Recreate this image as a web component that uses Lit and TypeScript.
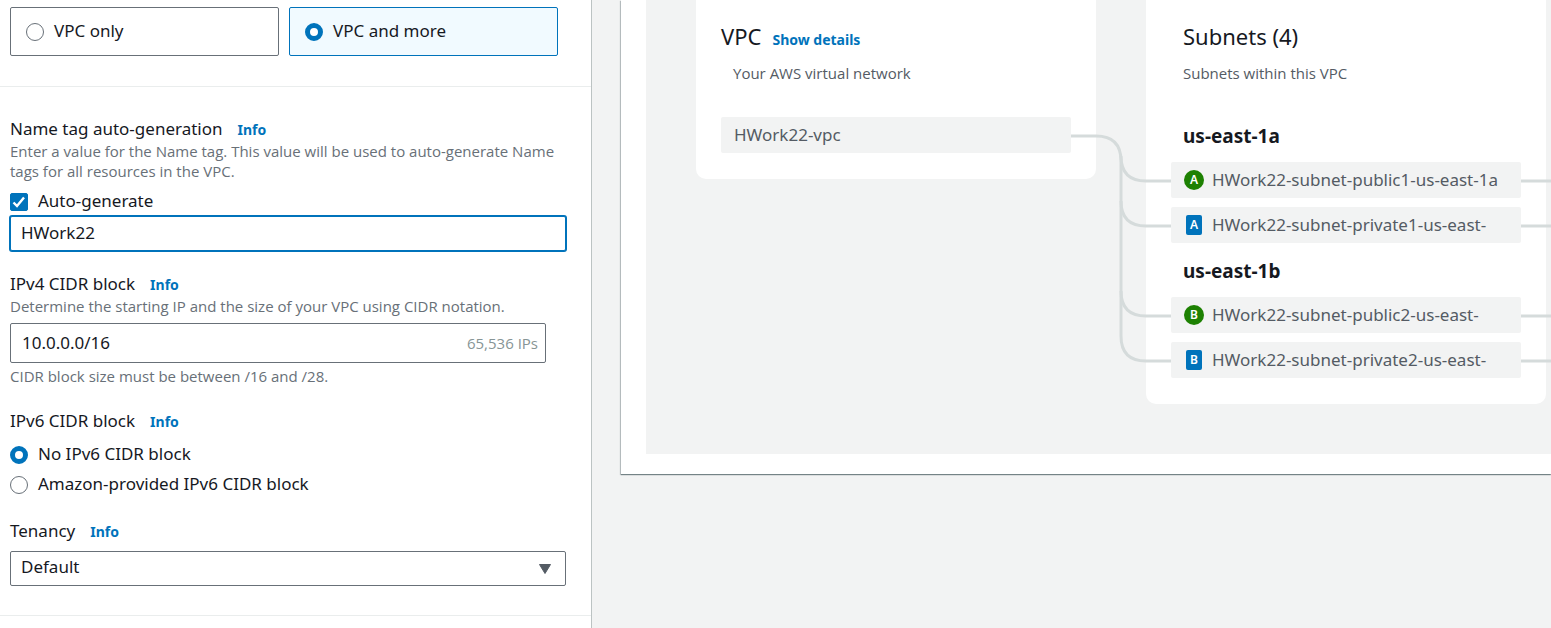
import { LitElement, html, svg, css } from "lit";
import { customElement, state } from "lit/decorators.js";

interface Subnet {
  zone: string;
  kind: "public" | "private";
  name: string;
}

interface Zone {
  name: string;
  subnets: Subnet[];
}

const ZONES: Zone[] = [
  {
    name: "us-east-1a",
    subnets: [
      { zone: "A", kind: "public", name: "HWork22-subnet-public1-us-east-1a" },
      { zone: "A", kind: "private", name: "HWork22-subnet-private1-us-east-" },
    ],
  },
  {
    name: "us-east-1b",
    subnets: [
      { zone: "B", kind: "public", name: "HWork22-subnet-public2-us-east-" },
      { zone: "B", kind: "private", name: "HWork22-subnet-private2-us-east-" },
    ],
  },
];

// Vertical centre of each subnet row on the canvas.
const ROWS = [181, 226, 316, 361];

const linkTo = (y: number) =>
  svg`<path d=${`M475 ${y - 25}Q475 ${y} 500 ${y}H525M875 ${y}H950`} />`;

@customElement("vpc-settings")
export class VpcSettings extends LitElement {
  @state() private resources = "more";

  static styles = css`
    :host {
      display: block;
      background: #fff;
      border-right: 1px solid #bcc3c3;
      color: #16191f;
    }
    * {
      box-sizing: border-box;
    }
    .section {
      padding: 31px 25px 29px 10px;
      border-bottom: 1px solid #eaeded;
    }
    .section.top {
      padding-top: 7px;
      padding-bottom: 30px;
    }
    .tiles {
      display: grid;
      grid-template-columns: 1fr 1fr;
      gap: 10px;
      margin-right: 8px;
    }
    .tile {
      display: flex;
      align-items: center;
      gap: 10px;
      height: 49px;
      padding: 0 15px;
      border: 1px solid #687078;
      border-radius: 2px;
    }
    .tile.selected {
      border-color: #0073bb;
      background: #f1faff;
    }
    .field {
      margin-bottom: 24px;
    }
    .field:first-child {
      margin-bottom: 22px;
    }
    .field:last-child {
      margin-bottom: 0;
    }
    .head {
      display: flex;
      align-items: baseline;
      gap: 15px;
      height: 22px;
    }
    .info {
      color: #0073bb;
      font-size: 14px;
      font-weight: 700;
      text-decoration: none;
    }
    .note {
      margin: 1px 0 7px;
      color: #687078;
      font-family: "Open Sans", "Noto Sans", sans-serif;
      font-size: 15px;
      line-height: 20px;
    }
    .note.after {
      margin: 3px 0 0;
    }
    .choice {
      display: flex;
      align-items: center;
      gap: 10px;
      height: 22px;
      margin-top: 8px;
    }
    .head + .choice {
      margin-top: 12px;
    }
    .choice.check {
      margin: 10px 0 3px;
    }
    .choice span,
    .tile span {
      padding-bottom: 2px;
    }
    input,
    select {
      font: inherit;
      color: inherit;
      margin: 0;
    }
    input[type="radio"],
    input[type="checkbox"] {
      appearance: none;
      flex: none;
      width: 18px;
      height: 18px;
      border: 1px solid #687078;
      border-radius: 50%;
      background: #fff;
    }
    input[type="radio"]:checked {
      border: 5px solid #0073bb;
    }
    input[type="checkbox"] {
      border-radius: 2px;
    }
    .choice .box {
      display: grid;
      flex: none;
      padding: 0;
    }
    .box > * {
      grid-area: 1 / 1;
    }
    .box input:checked {
      border-color: #0073bb;
      background: #0073bb;
    }
    .box svg {
      pointer-events: none;
    }
    .text {
      display: block;
      width: 100%;
      height: 35px;
      padding: 0 10px 2px;
      border: 1px solid #687078;
      border-radius: 2px;
      background: #fff;
      outline: none;
    }
    .text.active {
      border-color: #0073bb;
      box-shadow: 0 0 0 1px #0073bb;
    }
    .cidr {
      display: flex;
      align-items: center;
      height: 40px;
      margin-right: 20px;
      padding: 0 7px 0 11px;
      border: 1px solid #687078;
      border-radius: 2px;
    }
    .cidr input {
      flex: 1;
      min-width: 0;
      padding: 0;
      border: 0;
      outline: none;
      background: none;
    }
    .count {
      color: #879596;
      font-family: "Open Sans", "Noto Sans", sans-serif;
      font-size: 15px;
    }
    .select {
      display: grid;
      align-items: center;
      margin-top: 9px;
    }
    .select > * {
      grid-area: 1 / 1;
    }
    .select select {
      appearance: none;
      width: 100%;
      height: 35px;
      padding: 0 10px 3px;
      border: 1px solid #687078;
      border-radius: 2px;
      background: #fff;
    }
    .select svg {
      justify-self: end;
      margin-right: 14px;
      pointer-events: none;
    }
  `;

  private tile(value: string, label: string) {
    const on = this.resources === value;
    return html`<label class="tile ${on ? "selected" : ""}">
      <input
        type="radio"
        name="resources"
        .checked=${on}
        @change=${() => (this.resources = value)}
      />
      <span>${label}</span>
    </label>`;
  }

  render() {
    return html`
      <div class="section top">
        <div class="tiles">
          ${this.tile("only", "VPC only")} ${this.tile("more", "VPC and more")}
        </div>
      </div>
      <div class="section">
        <div class="field">
          <div class="head">
            <label for="name">Name tag auto-generation</label>
            <a class="info" href="#name">Info</a>
          </div>
          <p class="note">
            Enter a value for the Name tag. This value will be used to
            auto-generate Name tags for all resources in the VPC.
          </p>
          <label class="choice check">
            <span class="box">
              <input type="checkbox" checked />
              <svg width="18" height="18" viewBox="0 0 18 18" fill="none">
                <path d="M3.5 9.5 7 13 14 4.5" stroke="#fff" stroke-width="2.4" />
              </svg>
            </span>
            <span>Auto-generate</span>
          </label>
          <input id="name" class="text active" type="text" value="HWork22" />
        </div>
        <div class="field">
          <div class="head">
            <label for="ipv4">IPv4 CIDR block</label>
            <a class="info" href="#ipv4">Info</a>
          </div>
          <p class="note">
            Determine the starting IP and the size of your VPC using CIDR notation.
          </p>
          <div class="cidr">
            <input id="ipv4" type="text" value="10.0.0.0/16" />
            <span class="count">65,536 IPs</span>
          </div>
          <p class="note after">CIDR block size must be between /16 and /28.</p>
        </div>
        <div class="field" role="radiogroup" aria-labelledby="ipv6">
          <div class="head">
            <span id="ipv6">IPv6 CIDR block</span>
            <a class="info" href="#ipv6">Info</a>
          </div>
          <label class="choice">
            <input type="radio" name="ipv6" checked />
            <span>No IPv6 CIDR block</span>
          </label>
          <label class="choice">
            <input type="radio" name="ipv6" />
            <span>Amazon-provided IPv6 CIDR block</span>
          </label>
        </div>
        <div class="field">
          <div class="head">
            <label for="tenancy">Tenancy</label>
            <a class="info" href="#tenancy">Info</a>
          </div>
          <div class="select">
            <select id="tenancy">
              <option>Default</option>
            </select>
            <svg width="14" height="12" viewBox="0 0 14 12">
              <path
                d="M1.5 1.5h11L7 10.5z"
                fill="#545b64"
                stroke="#545b64"
                stroke-linejoin="round"
              />
            </svg>
          </div>
        </div>
      </div>
    `;
  }
}

@customElement("vpc-preview")
export class VpcPreview extends LitElement {
  static styles = css`
    :host {
      display: block;
      overflow: hidden;
      padding-left: 29px;
      background: #f2f3f3;
      color: #16191f;
    }
    * {
      box-sizing: border-box;
    }
    .panel {
      padding: 0 0 20px 25px;
      background: #fff;
      box-shadow:
        0 1px 1px 0 rgba(0, 28, 36, 0.4),
        -1px 1px 1px 0 rgba(0, 28, 36, 0.2);
    }
    .canvas {
      position: relative;
      display: flex;
      align-items: flex-start;
      gap: 50px;
      padding: 0 50px 50px;
      background: #f2f3f3;
    }
    .card {
      flex: none;
      width: 400px;
      padding: 21px 25px 26px;
      border-radius: 0 0 10px 10px;
      background: #fff;
    }
    .title {
      display: flex;
      align-items: baseline;
      gap: 11px;
      margin: 0;
      font-size: 22px;
      font-weight: 400;
      line-height: 30px;
    }
    .title a {
      color: #0073bb;
      font-size: 14px;
      font-weight: 700;
      line-height: 20px;
      text-decoration: none;
    }
    .about {
      margin: 12px 0 0;
      padding-left: 12px;
      color: #545b64;
      font-family: "Open Sans", "Noto Sans", sans-serif;
      font-size: 15px;
      line-height: 20px;
    }
    .subnets .title,
    .subnets .about,
    .zone {
      padding-left: 12px;
    }
    .zone {
      margin: 18px 0 16px;
      font-size: 19px;
      font-weight: 700;
      line-height: 20px;
    }
    .about + .zone {
      margin-top: 43px;
    }
    .items {
      display: grid;
      gap: 9px;
      margin: 0;
      padding: 0;
      list-style: none;
    }
    .item {
      display: flex;
      align-items: center;
      gap: 8px;
      height: 36px;
      padding: 0 13px;
      border-radius: 2px;
      background: #f2f3f3;
      color: #545b64;
      white-space: nowrap;
    }
    .about + .items {
      margin-top: 34px;
    }
    .badge {
      display: grid;
      place-items: center;
      flex: none;
      width: 20px;
      height: 20px;
      border-radius: 50%;
      background: #1d8102;
      color: #fff;
      font-size: 12px;
      font-weight: 600;
      line-height: 20px;
    }
    .badge.private {
      width: 16px;
      margin: 0 2px;
      border-radius: 2px;
      background: #0073bb;
    }
    .links {
      position: absolute;
      top: 0;
      left: 0;
      pointer-events: none;
    }
  `;

  render() {
    return html`
      <section class="panel">
        <div class="canvas">
          <article class="card">
            <h2 class="title">VPC <a href="#details">Show details</a></h2>
            <p class="about">Your AWS virtual network</p>
            <ul class="items">
              <li class="item">HWork22-vpc</li>
            </ul>
          </article>
          <article class="card subnets">
            <h2 class="title">Subnets (4)</h2>
            <p class="about">Subnets within this VPC</p>
            ${ZONES.map(
              (zone) => html`
                <h3 class="zone">${zone.name}</h3>
                <ul class="items">
                  ${zone.subnets.map(
                    (s) => html`<li class="item">
                      <span class="badge ${s.kind}">${s.zone}</span>
                      <span>${s.name}</span>
                    </li>`,
                  )}
                </ul>
              `,
            )}
          </article>
          <svg
            class="links"
            width="950"
            height="400"
            fill="none"
            stroke="#d5dbdb"
            stroke-width="3"
          >
            <path d="M425 136H450Q475 136 475 161V336" />
            ${ROWS.map((y) => linkTo(y))}
          </svg>
        </div>
      </section>
    `;
  }
}

@customElement("app-root")
export class AppRoot extends LitElement {
  static styles = css`
    :host {
      display: grid;
      grid-template-columns: minmax(0, 592fr) minmax(0, 959fr);
      min-height: 100vh;
      background: #fff;
      font-family: "Noto Sans", "Open Sans", sans-serif;
      font-size: 17px;
      line-height: 22px;
    }
  `;

  render() {
    return html`<vpc-settings></vpc-settings><vpc-preview></vpc-preview>`;
  }
}
